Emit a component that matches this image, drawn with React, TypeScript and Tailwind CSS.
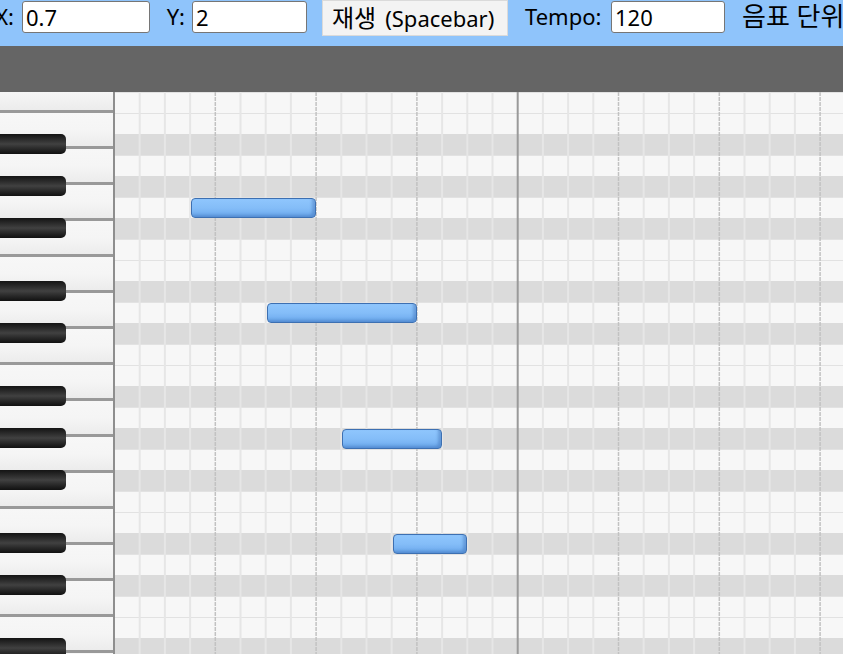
import React from "react";

const ROW_H = 21;
const COL_W = 25.2;
const ROWS = 28;
const COLS = 30;

// offsets within an octave (top = C, descending)
const BLACK = [2, 4, 6, 9, 11];

const notes = [
  { row: 5, col: 3, len: 5 },
  { row: 10, col: 6, len: 6 },
  { row: 16, col: 9, len: 4 },
  { row: 21, col: 11, len: 3 },
];

const font = { fontFamily: '"Noto Sans", "Noto Sans CJK KR", sans-serif' };

function Toolbar() {
  return (
    <div
      className="flex h-[46px] items-start overflow-hidden bg-[#8fc4fb] text-[22px] text-black"
      style={font}
    >
      <div className="flex h-[33px] w-[22px] shrink-0 items-center justify-end pr-[8px] whitespace-nowrap">
        X:
      </div>
      <input
        readOnly
        value="0.7"
        className="mt-[1px] h-[32px] w-[128px] shrink-0 rounded-[3px] border border-[#767676] bg-white px-[3px] text-[22px] outline-none"
      />
      <div className="flex h-[33px] w-[42px] shrink-0 items-center justify-end pr-[7px] whitespace-nowrap">
        Y:
      </div>
      <input
        readOnly
        value="2"
        className="mt-[1px] h-[32px] w-[115px] shrink-0 rounded-[3px] border border-[#767676] bg-white px-[3px] text-[22px] outline-none"
      />
      <button className="ml-[15px] flex h-[36px] w-[186px] shrink-0 items-center border border-[#dadada] bg-[#f3f3f3] pl-[9px] text-[22px] whitespace-nowrap">
        <span className="text-[24px]">재생</span>
        <span className="ml-[9px]">(Spacebar)</span>
      </button>
      <div className="flex h-[33px] w-[103px] shrink-0 items-center pl-[17px] whitespace-nowrap">
        Tempo:
      </div>
      <input
        readOnly
        value="120"
        className="mt-[1px] h-[32px] w-[114px] shrink-0 rounded-[3px] border border-[#767676] bg-white px-[3px] text-[22px] outline-none"
      />
      <div className="flex h-[33px] shrink-0 items-center pl-[17px] text-[26px] whitespace-nowrap">
        음표 단위
      </div>
    </div>
  );
}

function Piano() {
  const whites = Array.from({ length: 17 });
  const blacks: number[] = [];
  for (let r = 0; r < ROWS; r++) if (BLACK.includes(r % 12)) blacks.push(r);
  return (
    <div className="relative h-full w-[115px] shrink-0 overflow-hidden border-r-[2px] border-[#8e8e8e] bg-[#f6f6f6]">
      <div className="-mt-[15px] flex flex-col">
        {whites.map((_, i) => (
          <div
            key={i}
            className="h-[36px] shrink-0 border-b-[3px] border-[#999999] bg-gradient-to-b from-[#f7f7f7] via-[#f5f5f5] to-[#ececec]"
          />
        ))}
      </div>
      {blacks.map((r) => (
        <div
          key={r}
          className="absolute left-0 h-[20px] w-[66px] rounded-r-[5px] bg-gradient-to-b from-[#141414] via-[#414141] to-[#111111]"
          style={{ top: r * ROW_H }}
        />
      ))}
    </div>
  );
}

function Grid() {
  const lines = Array.from({ length: COLS }, (_, i) => i + 1);
  return (
    <div className="relative h-full flex-1 overflow-hidden">
      <div className="flex flex-col">
        {Array.from({ length: ROWS }).map((_, r) => {
          const dark = BLACK.includes(r % 12);
          return (
            <div
              key={r}
              className={
                dark
                  ? "h-[21px] shrink-0 bg-[#dbdbdb]"
                  : "h-[21px] shrink-0 border-t border-[#e2e2e2] bg-[#f7f7f7]"
              }
            />
          );
        })}
      </div>
      <svg className="pointer-events-none absolute inset-0 h-full w-full">
        {lines.map((k) => {
          const x = k * COL_W - 0.5;
          if (k % 16 === 0)
            return (
              <line key={k} x1={x} x2={x} y1={0} y2={700} stroke="#9a9a9a" strokeWidth={2} />
            );
          if (k % 4 === 0)
            return (
              <line
                key={k}
                x1={x}
                x2={x}
                y1={0}
                y2={700}
                stroke="#c2c2c2"
                strokeWidth={1.5}
                strokeDasharray="4 1"
              />
            );
          return (
            <line key={k} x1={x} x2={x} y1={0} y2={700} stroke="#e6e6e6" strokeWidth={2} />
          );
        })}
      </svg>
      {notes.map((n, i) => (
        <div
          key={i}
          className="absolute rounded-[4px] border border-[#3d70b2] bg-gradient-to-b from-[#8fc6fd] via-[#84bdf8] to-[#6ba8ec] shadow-[inset_-3px_-2px_3px_rgba(40,90,160,0.35)]"
          style={{
            left: n.col * COL_W + 0.5,
            top: n.row * ROW_H + 1,
            width: n.len * COL_W - 1,
            height: ROW_H - 1,
          }}
        />
      ))}
    </div>
  );
}

export default function App() {
  return (
    <div className="flex h-[654px] w-[843px] flex-col overflow-hidden bg-white">
      <Toolbar />
      <div className="h-[46px] shrink-0 bg-[#656565]" />
      <div className="flex min-h-0 flex-1">
        <Piano />
        <Grid />
      </div>
    </div>
  );
}
